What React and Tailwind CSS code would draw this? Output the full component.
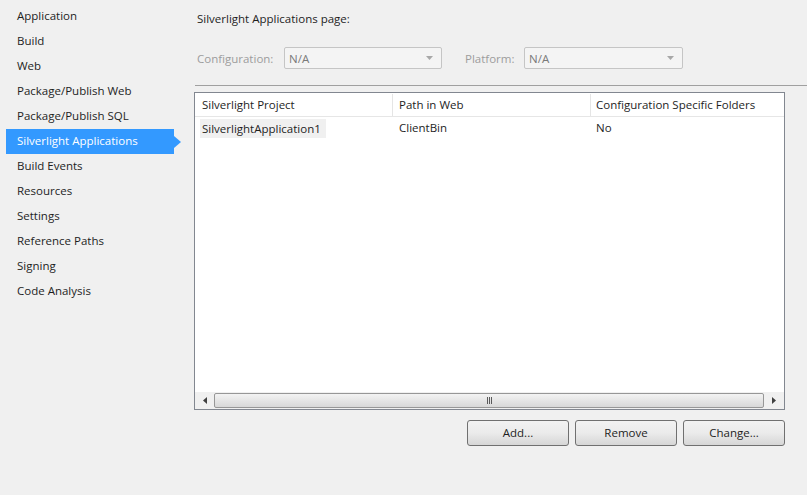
import React from 'react';

const navItems = [
  'Application',
  'Build',
  'Web',
  'Package/Publish Web',
  'Package/Publish SQL',
  'Silverlight Applications',
  'Build Events',
  'Resources',
  'Settings',
  'Reference Paths',
  'Signing',
  'Code Analysis',
];

const font = { fontFamily: '"Open Sans", "Noto Sans", sans-serif' };

const Combo = ({ width }) => (
  <div
    className={`flex items-center justify-between h-[22px] border border-[#c5c5c5] rounded-[2px] bg-[#f4f4f4] pl-[4px] pr-[8px] ${width}`}
  >
    <span className="text-[#7a7a7a] pt-px">N/A</span>
    <svg width="7" height="4" viewBox="0 0 7 4">
      <path d="M0 0h7L3.5 4z" fill="#a8a8a8" />
    </svg>
  </div>
);

const WinButton = ({ children }) => (
  <button className="w-[102px] h-[26px] border border-[#707070] rounded-[3px] bg-gradient-to-b from-[#f2f2f2] via-[#ebebeb] to-[#d6d6d6] text-[#1e1e1e] text-[11.5px] leading-none">
    {children}
  </button>
);

export default function App() {
  return (
    <div
      className="w-[807px] h-[495px] bg-[#f0f0f0] flex text-[11.5px] text-[#1e1e1e] overflow-hidden"
      style={font}
    >
      {/* left navigation */}
      <div className="w-[194px] shrink-0 pt-[4px]">
        {navItems.map((item) => {
          const active = item === 'Silverlight Applications';
          return (
            <div key={item} className="relative h-[25px] flex items-center">
              <div
                className={`ml-[6px] w-[168px] h-[25px] flex items-center pl-[11px] pb-[2px] ${
                  active ? 'bg-[#3399ff] text-white' : ''
                }`}
              >
                {item}
              </div>
              {active && (
                <svg className="absolute left-[174px] top-[7px]" width="7" height="12" viewBox="0 0 7 12">
                  <path d="M0 0L7 6L0 12z" fill="#3399ff" />
                </svg>
              )}
            </div>
          );
        })}
      </div>

      {/* content */}
      <div className="flex-1 flex flex-col">
        <div className="pl-[3px] pt-[11px] leading-[16px]">Silverlight Applications page:</div>

        <div className="flex items-center mt-[20px] pl-[3px] h-[22px] text-[#9d9d9d]">
          <span className="w-[87px] pt-px">Configuration:</span>
          <Combo width="w-[158px]" />
          <span className="ml-[23px] w-[59px] pt-px">Platform:</span>
          <Combo width="w-[159px]" />
        </div>

        <div className="ml-[1px] mt-[16px] h-px bg-[#a0a0a0]" />

        <div className="mt-[6px] w-[591px] h-[318px] border border-[#828790] bg-white flex flex-col">
          <div className="flex h-[24px] border-b border-[#e6e6e6] shrink-0 pt-px">
            <div className="w-[198px] border-r border-[#e5e5e5] pl-[7px] flex items-center">Silverlight Project</div>
            <div className="w-[198px] border-r border-[#e5e5e5] pl-[6px] flex items-center">Path in Web</div>
            <div className="flex-1 pl-[5px] flex items-center">Configuration Specific Folders</div>
          </div>
          <div className="flex h-[21px] items-center pt-px">
            <div className="w-[198px] pl-[5px]">
              <span className="inline-block bg-[#f0f0f0] pl-[2px] pr-[5px] leading-[19px]">SilverlightApplication1</span>
            </div>
            <div className="w-[198px] pl-[6px]">ClientBin</div>
            <div className="flex-1 pl-[5px]">No</div>
          </div>
          <div className="flex-1" />
          {/* horizontal scrollbar */}
          <div className="h-[17px] flex items-center bg-[#f0f0f0] shrink-0">
            <div className="w-[19px] h-full flex items-center justify-center">
              <svg width="4" height="7" viewBox="0 0 4 7">
                <path d="M4 0v7L0 3.5z" fill="#404040" />
              </svg>
            </div>
            <div className="flex-1 h-[15px] border border-[#979797] rounded-[2px] bg-gradient-to-b from-[#f3f3f3] to-[#d8d8d8] flex items-center justify-center">
              <div className="flex gap-[1px]">
                <div className="w-px h-[7px] bg-[#5a5a5a]" />
                <div className="w-px h-[7px] bg-[#5a5a5a]" />
                <div className="w-px h-[7px] bg-[#5a5a5a]" />
              </div>
            </div>
            <div className="w-[20px] h-full flex items-center justify-center">
              <svg width="4" height="7" viewBox="0 0 4 7">
                <path d="M0 0v7L4 3.5z" fill="#404040" />
              </svg>
            </div>
          </div>
        </div>

        <div className="flex gap-[6px] mt-[10px] w-[591px] justify-end">
          <WinButton>Add...</WinButton>
          <WinButton>Remove</WinButton>
          <WinButton>Change...</WinButton>
        </div>
      </div>
    </div>
  );
}
